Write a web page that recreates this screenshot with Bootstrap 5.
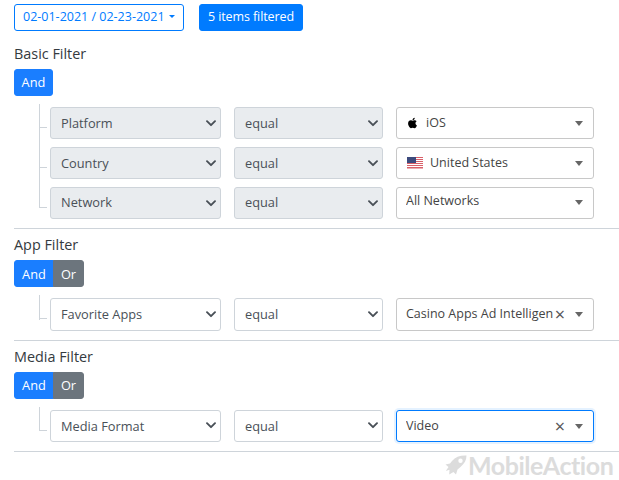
<!DOCTYPE html>
<html lang="en">
<head>
<meta charset="utf-8">
<title>Filters</title>
<link href="https://cdn.jsdelivr.net/npm/bootstrap@5.3.0/dist/css/bootstrap.min.css" rel="stylesheet">
<style>
html,body{height:480px;overflow:hidden}
body{font-family:"Open Sans",sans-serif;font-size:12.5px;color:#495057;background:#fff;padding:4px 0 0 14px;position:relative}
.page-wrap{width:605px}
.top-btn{font-size:12.5px;height:27px;padding:0 0 2px;line-height:23px;border-radius:3px}
.date-btn{width:170px;white-space:nowrap;padding:0 0 2px 8px;text-align:left}
.date-btn::after{margin-left:4px;vertical-align:3px}
.count-btn{width:104px;letter-spacing:-.1px}
.btn-primary{--bs-btn-bg:#007bff;--bs-btn-border-color:#007bff}
.btn-outline-primary{--bs-btn-color:#007bff;--bs-btn-border-color:#007bff}
.group-title{font-size:14.4px;color:#343a40;line-height:20px;margin:0 0 5px}
.logic-btn{font-size:12.8px;height:26.8px;padding:0;line-height:24px;border-radius:3px}
.logic-or{background:#6c757d;border-color:#6c757d;width:31px;color:#fff}
.logic-on{background:#1a7eff;border-color:#1a7eff;color:#fff;width:40px}
.logic-solo{width:39px}
.rule-list{padding:11.2px 0 0 36px;margin:0}
.rule-line{position:relative;height:32.4px;margin-bottom:7.6px;display:flex;align-items:stretch}
.rule-line:last-child{margin-bottom:0}
.rule-line::before{content:"";position:absolute;left:-11px;top:-3px;bottom:-8px;border-left:1px solid #ced4da}
.rule-line::after{content:"";position:absolute;left:-11px;top:20px;width:8px;border-top:1px solid #ced4da}
.rule-line:last-child::before{bottom:11px}
.field-sel,.op-sel{font-size:12.8px;height:auto;padding:0 20px 0 10px;border-radius:3px;color:#495057;border-color:#ced4da;--bs-form-select-bg-img:url("data:image/svg+xml,%3csvg xmlns='http://www.w3.org/2000/svg' viewBox='0 0 10 7'%3e%3cpath fill='none' stroke='%23495057' stroke-linecap='round' stroke-linejoin='round' stroke-width='1.9' d='M1 1.200l4 4 4-4'/%3e%3c/svg%3e");background-size:10px 7px;background-position:right 4px center}
.field-sel{width:171px;margin-right:13px;flex:none}
.op-sel{width:149px;margin-right:13px;flex:none}
.form-select:disabled{background-color:#e9ecef;color:#495057;opacity:1}
.row-up select{padding-bottom:1px}
.row-down select{padding-top:1px}
.val-box{width:198px;flex:none;border:1px solid #c8c8c8;border-radius:3px;display:flex;align-items:center;padding:0 9px 0 10px;color:#444;position:relative;white-space:nowrap}
.val-box::after{content:"";position:absolute;right:10px;top:13px;border-style:solid;border-width:5px 4px 0;border-color:#666 transparent transparent}
.val-focus{border-color:#007bff;box-shadow:0 0 0 2px rgba(0,123,255,.1)}
.val-text{flex:1;overflow:hidden;white-space:nowrap;line-height:18px}
.val-plain{padding-left:9px}
.val-plain .val-text{padding-bottom:2px}
.val-focus.val-plain .val-text{padding-bottom:0}
.val-high{padding-bottom:2px}
.val-high::after{top:12px}
.clear-x{position:absolute;right:28px;top:4px;font-size:18px;line-height:22px;color:#555;background:#fff}
.ios-icon{margin-right:8px;flex:none}
.flag-icon{margin-right:7px;flex:none}
.us-text{padding-bottom:1px}
.sep{margin:9px 0 6px;border:0;border-top:1px solid #ced4da;opacity:1}
.top-gap{margin-bottom:13px;gap:15px}
.brand-mark{position:absolute;left:445px;top:452px;display:flex;align-items:center;gap:1px;color:#dcdcdc;font-family:"Lato",sans-serif;font-weight:700;font-size:25px;line-height:27px;letter-spacing:-.45px}
</style>
</head>
<body>
<div class="page-wrap">
  <div class="d-flex top-gap">
    <button class="btn btn-outline-primary dropdown-toggle top-btn date-btn" type="button">02-01-2021 / 02-23-2021</button>
    <button class="btn btn-primary top-btn count-btn" type="button">5 items filtered</button>
  </div>

  <p class="group-title">Basic Filter</p>
  <div class="btn-group"><button class="btn logic-btn logic-on logic-solo" type="button">And</button></div>
  <div class="rule-list">
    <div class="rule-line">
      <select class="form-select field-sel" disabled><option>Platform</option></select>
      <select class="form-select op-sel" disabled><option>equal</option></select>
      <div class="val-box">
        <svg class="ios-icon" width="11" height="12" viewBox="0 0 384 512" aria-hidden="true"><path fill="#000" d="M318.7 268.7c-.2-36.7 16.4-64.4 50-84.8-18.8-26.9-47.2-41.7-84.7-44.6-35.5-2.8-74.3 20.7-88.5 20.7-15 0-49.4-19.7-76.4-19.7C63.3 141.2 4 184.8 4 273.5q0 39.3 14.4 81.2c12.8 36.7 59 126.7 107.2 125.2 25.2-.6 43-17.9 75.8-17.9 31.8 0 48.3 17.9 76.4 17.9 48.6-.7 90.4-82.5 102.6-119.3-65.2-30.7-61.7-90-61.7-91.9zm-56.6-164.2c27.3-32.4 24.8-61.9 24-72.5-24.1 1.4-52 16.4-67.9 34.9-17.5 19.8-27.8 44.3-25.6 71.9 26.1 2 49.9-11.4 69.5-34.3z"/></svg>
        <span class="val-text">iOS</span>
      </div>
    </div>
    <div class="rule-line">
      <select class="form-select field-sel" disabled><option>Country</option></select>
      <select class="form-select op-sel" disabled><option>equal</option></select>
      <div class="val-box">
        <svg class="flag-icon" width="16" height="12" viewBox="0 0 16 12" aria-hidden="true"><rect width="16" height="12" fill="#fff"/><path fill="#d9606a" d="M0 0h16v1H0zM0 2h16v1H0zM0 4h16v1H0zM0 6h16v1H0zM0 8h16v1H0zM0 10h16v1.400H0z"/><rect width="9" height="6" fill="#3c4a7d"/></svg>
        <span class="val-text us-text">United States</span>
      </div>
    </div>
    <div class="rule-line row-up">
      <select class="form-select field-sel" disabled><option>Network</option></select>
      <select class="form-select op-sel" disabled><option>equal</option></select>
      <div class="val-box val-plain val-high"><span class="val-text">All Networks</span></div>
    </div>
  </div>
  <hr class="sep">

  <p class="group-title">App Filter</p>
  <div class="btn-group"><button class="btn logic-btn logic-on" type="button">And</button><button class="btn logic-btn logic-or" type="button">Or</button></div>
  <div class="rule-list">
    <div class="rule-line">
      <select class="form-select field-sel"><option>Favorite Apps</option></select>
      <select class="form-select op-sel"><option>equal</option></select>
      <div class="val-box val-plain"><span class="val-text">Casino Apps Ad Intelligen</span><span class="clear-x">×</span></div>
    </div>
  </div>
  <hr class="sep">

  <p class="group-title">Media Filter</p>
  <div class="btn-group"><button class="btn logic-btn logic-on" type="button">And</button><button class="btn logic-btn logic-or" type="button">Or</button></div>
  <div class="rule-list">
    <div class="rule-line row-down">
      <select class="form-select field-sel"><option>Media Format</option></select>
      <select class="form-select op-sel"><option>equal</option></select>
      <div class="val-box val-plain val-focus"><span class="val-text">Video</span><span class="clear-x">×</span></div>
    </div>
  </div>
  <hr class="sep">
</div>

<div class="brand-mark">
  <svg width="22" height="21" viewBox="0 0 22 21" aria-hidden="true"><path fill="#dcdcdc" d="M21.500.500C15 .2 10.500 2 7 6L5 8.500.500 9.500l3 2.500L.800 16l3.700-1.200-.3 4.700 4.300-2.500 2.500 2.500 1.500-5 3-2.500C19.500 8.500 21.500 5 21.500.500zM15.500 3.500a2.200 2.200 0 1 1 0 4.400 2.200 2.200 0 0 1 0-4.400z"/></svg>
  <span>MobileAction</span>
</div>
</body>
</html>
